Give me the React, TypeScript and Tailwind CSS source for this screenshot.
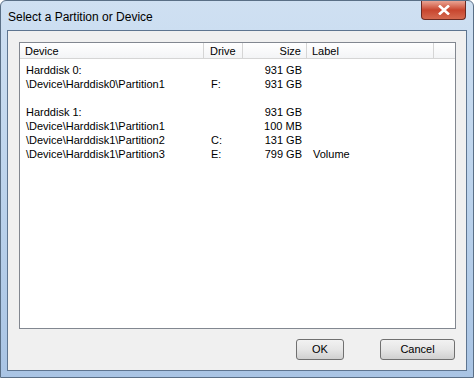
import React from "react";

const rows = [
  { device: "Harddisk 0:", drive: "", size: "931 GB", label: "" },
  { device: "\\Device\\Harddisk0\\Partition1", drive: "F:", size: "931 GB", label: "" },
  { device: "", drive: "", size: "", label: "" },
  { device: "Harddisk 1:", drive: "", size: "931 GB", label: "" },
  { device: "\\Device\\Harddisk1\\Partition1", drive: "", size: "100 MB", label: "" },
  { device: "\\Device\\Harddisk1\\Partition2", drive: "C:", size: "131 GB", label: "" },
  { device: "\\Device\\Harddisk1\\Partition3", drive: "E:", size: "799 GB", label: "Volume" },
];

export default function App() {
  return (
    <div
      className="w-[474px] h-[378px] overflow-hidden bg-white"
      style={{ fontFamily: '"Segoe UI", "Liberation Sans", Arial, sans-serif' }}
    >
      {/* window frame */}
      <div className="w-[474px] h-[378px] flex flex-col border border-[#5a6f86] rounded-t-[6px] bg-gradient-to-b from-[#cfe0f2] via-[#bcd3ec] to-[#a9c4e4]">
        {/* title bar */}
        <div className="h-[29px] flex items-start shrink-0">
          <div className="pl-[7px] pt-[7px] text-[12px] text-black">Select a Partition or Device</div>
          <div className="ml-auto mr-[7px] w-[45px] h-[19px] rounded-b-[4px] border border-t-0 border-[#6b2a22] bg-gradient-to-b from-[#e9a393] via-[#c8452e] to-[#d5694f] flex items-center justify-center">
            <svg width="12" height="10" viewBox="0 0 12 10">
              <path d="M1 0.5 L11 9.5 M11 0.5 L1 9.5" stroke="#fff" strokeWidth="2.6" />
            </svg>
          </div>
        </div>

        {/* client */}
        <div className="mx-[6px] mb-[6px] flex-1 flex flex-col border border-[#5e7590] bg-[#f0f0f0]">
          <div className="ml-[11px] mr-[10px] mt-[11px] h-[287px] border border-[#828790] bg-white flex flex-col">
            {/* header */}
            <div className="flex h-[16px] text-[11px] leading-[16px] text-black border-b border-[#d5d5d5] bg-gradient-to-b from-[#ffffff] to-[#f3f4f6]">
              <div className="w-[184px] pl-[5px] border-r border-[#d5d5d5]">Device</div>
              <div className="w-[39px] pl-[6px] border-r border-[#d5d5d5]">Drive</div>
              <div className="w-[64px] pr-[5px] text-right border-r border-[#d5d5d5]">Size</div>
              <div className="w-[127px] pl-[5px] border-r border-[#d5d5d5]">Label</div>
              <div className="flex-1" />
            </div>
            {/* rows */}
            <div className="pt-[4px] text-[11px] text-black">
              {rows.map((r, i) => (
                <div key={i} className="flex h-[14px] leading-[14px]">
                  <div className="w-[184px] pl-[6px] whitespace-pre">{r.device}</div>
                  <div className="w-[39px] pl-[7px]">{r.drive}</div>
                  <div className="w-[64px] pr-[5px] text-right">{r.size}</div>
                  <div className="w-[127px] pl-[6px]">{r.label}</div>
                </div>
              ))}
            </div>
          </div>

          {/* buttons */}
          <div className="flex justify-end gap-[36px] mr-[11px] mt-[10px]">
            <button className="w-[48px] h-[21px] rounded-[3px] border border-[#707070] bg-gradient-to-b from-[#f2f2f2] via-[#e6e6e6] to-[#d0d0d0] text-[11px] text-black">
              OK
            </button>
            <button className="w-[75px] h-[21px] rounded-[3px] border border-[#707070] bg-gradient-to-b from-[#f2f2f2] via-[#e6e6e6] to-[#d0d0d0] text-[11px] text-black">
              Cancel
            </button>
          </div>
        </div>
      </div>
    </div>
  );
}
